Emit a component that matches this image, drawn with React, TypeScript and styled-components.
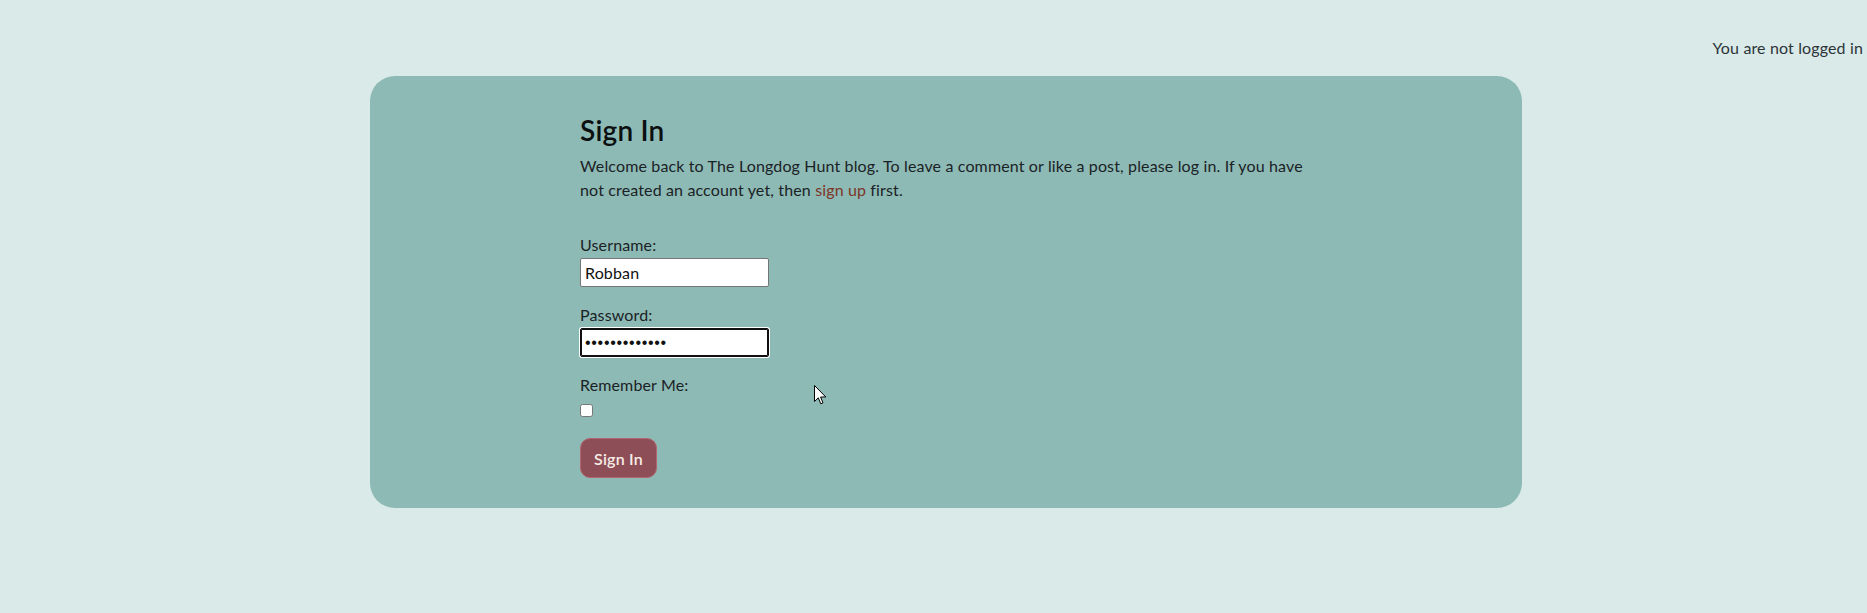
import React from "react";
import styled, { createGlobalStyle } from "styled-components";

const GlobalStyle = createGlobalStyle`
  html, body {
    margin: 0;
    padding: 0;
  }
  body {
    background: #d9eae9;
    font-family: "Lato", "Liberation Sans", sans-serif;
    font-size: 16px;
    line-height: 24px;
    letter-spacing: 0.14px;
    color: #1b2226;
  }
`;

const Page = styled.div`
  position: relative;
  min-height: 613px;
  overflow: hidden;
`;

const TopBar = styled.header`
  display: flex;
  justify-content: flex-end;
  padding: 36px 4px 0 0;
  height: 24px;
`;

const Status = styled.span`
  color: #2c3438;
  white-space: nowrap;
`;

const Card = styled.main`
  box-sizing: border-box;
  margin: 16px 0 0 370px;
  width: 1152px;
  padding: 37.5px 0 30px 210px;
  background: #8dbab5;
  border-radius: 25px;
`;

const Content = styled.section`
  width: 732px;
  display: flex;
  flex-direction: column;
`;

const Title = styled.h1`
  margin: 0 0 6.5px;
  font-size: 28px;
  line-height: 33.6px;
  font-weight: 600;
  letter-spacing: 0.2px;
  color: #0c0f10;
`;

const Intro = styled.p`
  margin: 0 0 31px;
`;

const Link = styled.a`
  color: #7d3526;
  text-decoration: none;
`;

const Form = styled.form`
  display: flex;
  flex-direction: column;
`;

const Field = styled.div<{ $gap?: number }>`
  display: flex;
  flex-direction: column;
  align-items: flex-start;
  gap: ${(p) => p.$gap ?? 1.5}px;
  margin-bottom: 15.5px;
`;

const Label = styled.label`
  color: #1b2226;
`;

const TextInput = styled.input<{ $focused?: boolean }>`
  box-sizing: border-box;
  width: 189px;
  height: 29px;
  margin: 0;
  padding: 1px 4px;
  font-family: ${(p) => (p.$focused ? '"Liberation Sans", sans-serif' : "inherit")};
  font-size: 16px;
  letter-spacing: ${(p) => (p.$focused ? "0.7px" : "0.14px")};
  color: #111;
  background: #fff;
  border: 1px solid ${(p) => (p.$focused ? "#101010" : "#767676")};
  border-radius: 2px;
  outline: none;
  box-shadow: ${(p) =>
    p.$focused ? "inset 0 0 0 1px #101010, 0 0 0 1px #ffffff" : "none"};
`;

const Checkbox = styled.input`
  appearance: none;
  box-sizing: border-box;
  width: 13px;
  height: 13px;
  margin: 0;
  background: #fff;
  border: 1px solid #767676;
  border-radius: 2.5px;
`;

const Button = styled.button`
  box-sizing: border-box;
  align-self: flex-start;
  margin-top: 6px;
  width: 77px;
  height: 40px;
  padding: 0;
  font-family: inherit;
  font-size: 16px;
  font-weight: 600;
  letter-spacing: 0.2px;
  color: #f7ede6;
  background: #8e4e58;
  border: 1px solid #b3646f;
  border-radius: 10px;
  cursor: pointer;
`;

const Cursor = styled.svg`
  position: absolute;
  left: 814px;
  top: 385px;
  pointer-events: none;
`;

export default function App() {
  return (
    <Page>
      <GlobalStyle />
      <TopBar>
        <Status>You are not logged in</Status>
      </TopBar>
      <Card>
        <Content>
          <Title>Sign In</Title>
          <Intro>
            Welcome back to The Longdog Hunt blog. To leave a comment or like a
            post, please log in. If you have not created an account yet, then{" "}
            <Link href="#">sign up</Link> first.
          </Intro>
          <Form onSubmit={(e) => e.preventDefault()}>
            <Field>
              <Label htmlFor="username">Username:</Label>
              <TextInput id="username" type="text" defaultValue="Robban" />
            </Field>
            <Field>
              <Label htmlFor="password">Password:</Label>
              <TextInput
                id="password"
                type="password"
                defaultValue="Robban1234567"
                $focused
              />
            </Field>
            <Field $gap={7}>
              <Label htmlFor="remember">Remember Me:</Label>
              <Checkbox id="remember" type="checkbox" />
            </Field>
            <Button type="submit">Sign In</Button>
          </Form>
        </Content>
      </Card>
      <Cursor width="13" height="21" viewBox="0 0 13 21">
        <path
          d="M0.5 0.5 L0.5 16.5 L4.3 12.8 L6.8 18.8 L9 17.9 L6.6 12 L11.8 12 Z"
          fill="#fff"
          stroke="#000"
          strokeWidth="1"
          strokeLinejoin="miter"
        />
      </Cursor>
    </Page>
  );
}
